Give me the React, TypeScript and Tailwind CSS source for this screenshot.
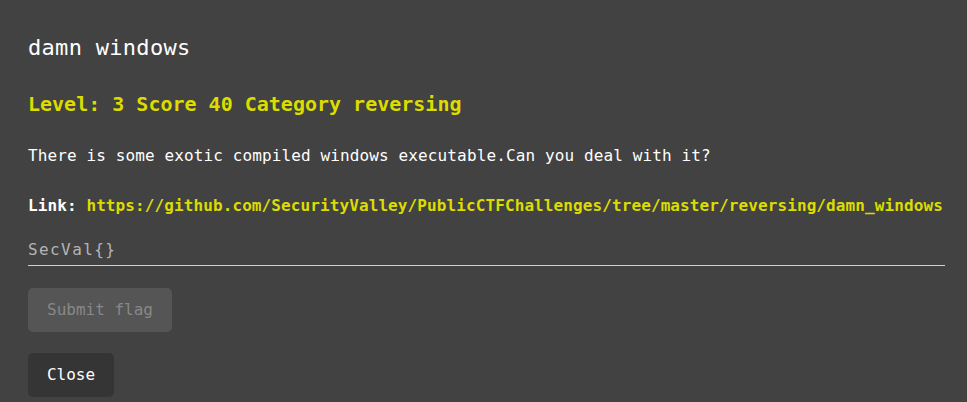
import React from "react";

export default function App() {
  return (
    <div
      className="min-h-screen w-full bg-[#424242] pl-[28px] pr-[22px] pt-[33px]"
      style={{ fontFamily: '"DejaVu Sans Mono", "Liberation Mono", monospace' }}
    >
      <h1 className="text-[22px] leading-[30px] text-white tracking-[0.3px] font-normal">
        damn windows
      </h1>
      <h2 className="mt-[27px] text-[20px] leading-[28px] font-bold text-[#dcdc00]">
        Level: 3 Score 40 Category reversing
      </h2>
      <p className="mt-[26px] text-[16px] leading-[24px] text-white tracking-[0.12px]">
        There is some exotic compiled windows executable.Can you deal with it?
      </p>
      <p className="mt-[26px] whitespace-nowrap text-[16px] leading-[24px] font-bold tracking-[0.1px]">
        <span className="text-white">Link: </span>
        <span className="text-[#dcdc00]">
          https://github.com/SecurityValley/PublicCTFChallenges/tree/master/reversing/damn_windows
        </span>
      </p>
      <input
        readOnly
        value="SecVal{}"
        className="mt-[19px] block h-[29px] w-full border-b border-[#d0d0d0] bg-transparent pb-[4px] text-[16px] tracking-[1.4px] text-[#b4b4b4] outline-none"
        style={{ fontFamily: '"DejaVu Sans Mono", "Liberation Mono", monospace' }}
      />
      <button
        disabled
        className="mt-[22px] block h-[44px] w-[144px] rounded-[5px] bg-[#555555] text-[16px] text-[#888888]"
        style={{ fontFamily: '"DejaVu Sans Mono", "Liberation Mono", monospace' }}
      >
        Submit flag
      </button>
      <button
        className="mt-[21px] block h-[44px] w-[86px] rounded-[5px] bg-[#353535] text-[16px] text-white"
        style={{ fontFamily: '"DejaVu Sans Mono", "Liberation Mono", monospace' }}
      >
        Close
      </button>
    </div>
  );
}
